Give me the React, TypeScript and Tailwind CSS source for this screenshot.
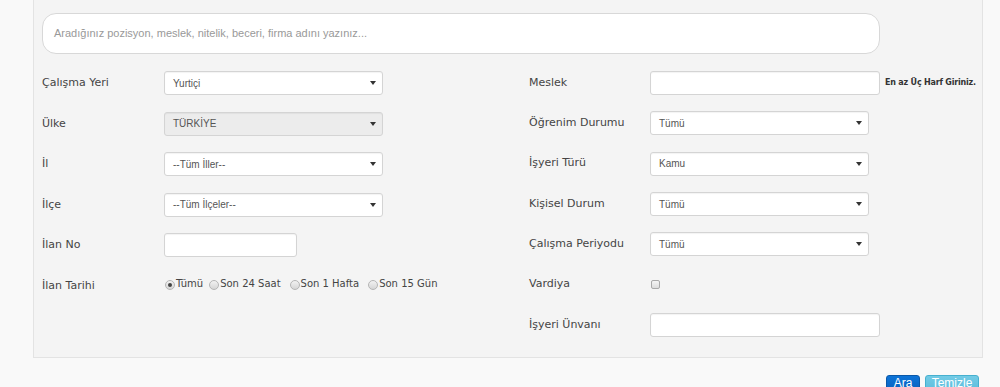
import React from 'react'

const leftRows = [
  { label: 'Çalışma Yeri', type: 'select', value: 'Yurtiçi' },
  { label: 'Ülke', type: 'disabled', value: 'TÜRKİYE' },
  { label: 'İl', type: 'select', value: '--Tüm İller--' },
  { label: 'İlçe', type: 'select', value: '--Tüm İlçeler--' },
  { label: 'İlan No', type: 'short' },
  { label: 'İlan Tarihi', type: 'radio' },
]

const rightRows = [
  { label: 'Meslek', type: 'meslek' },
  { label: 'Öğrenim Durumu', type: 'select', value: 'Tümü' },
  { label: 'İşyeri Türü', type: 'select', value: 'Kamu' },
  { label: 'Kişisel Durum', type: 'select', value: 'Tümü' },
  { label: 'Çalışma Periyodu', type: 'select', value: 'Tümü' },
  { label: 'Vardiya', type: 'check' },
  { label: 'İşyeri Ünvanı', type: 'text' },
]

const radios = [
  { text: 'Tümü', gap: 'ml-[1px]' },
  { text: 'Son 24 Saat', gap: 'ml-[6px]' },
  { text: 'Son 1 Hafta', gap: 'ml-[9px]' },
  { text: 'Son 15 Gün', gap: 'ml-[9px]' },
]

const Select = ({ value, disabled, w }: { value: string; disabled?: boolean; w: string }) => (
  <div
    className={`${w} flex h-[24px] items-center justify-between rounded-[3px] border border-[#d4d4d4] pr-[6px] pl-[8px] text-[10px] text-[#555] shadow-[inset_0_1px_1px_rgba(0,0,0,0.05)] ${
      disabled ? 'bg-[#ececec]' : 'bg-white'
    }`}
    style={{ fontFamily: '"Liberation Sans", Arial, sans-serif' }}
  >
    <span>{value}</span>
    <svg width="6" height="4" viewBox="0 0 6 4">
      <path d="M0 0h6L3 4z" fill="#333" />
    </svg>
  </div>
)

const TextBox = ({ w }: { w: string }) => (
  <div className={`${w} h-[24px] shrink-0 rounded-[3px] border border-[#d4d4d4] bg-white shadow-[inset_0_1px_1px_rgba(0,0,0,0.05)]`} />
)

const Radio = ({ checked }: { checked?: boolean }) => (
  <span className="mt-[4px] flex h-[10px] w-[10px] items-center justify-center rounded-full border border-[#b5b5b5] bg-gradient-to-b from-[#f2f2f2] to-[#d6d6d6]">
    {checked && <span className="h-[4px] w-[4px] rounded-full bg-[#444]" />}
  </span>
)

function renderField(row: any) {
  switch (row.type) {
    case 'select':
      return <Select value={row.value} w="w-[219px]" />
    case 'disabled':
      return <Select value={row.value} disabled w="w-[219px]" />
    case 'short':
      return <TextBox w="w-[133px]" />
    case 'text':
      return <TextBox w="w-[230px]" />
    case 'meslek':
      return (
        <div className="flex items-center">
          <TextBox w="w-[230px]" />
          <span
            className="ml-[5px] text-[8px] font-bold tracking-[-0.2px] whitespace-nowrap text-[#333]"
            style={{ fontFamily: '"DejaVu Sans", Verdana, sans-serif' }}
          >
            En az Üç Harf Giriniz.
          </span>
        </div>
      )
    case 'check':
      return (
        <span className="ml-[1px] block h-[9px] w-[9px] rounded-[2px] border border-[#a9a9a9] bg-gradient-to-b from-[#f5f5f5] to-[#dcdcdc]" />
      )
    case 'radio':
      return (
        <div className="-mt-[5px] flex items-start text-[10px] text-[#444]">
          {radios.map((r, i) => (
            <label key={r.text} className={`flex items-start whitespace-nowrap ${r.gap}`}>
              <Radio checked={i === 0} />
              <span className="ml-[1px]">{r.text}</span>
            </label>
          ))}
        </div>
      )
  }
  return null
}

const App: React.FC = () => {
  return (
    <div
      className="h-[387px] w-[1000px] overflow-hidden bg-[#f9f9f9] text-[#444]"
      style={{ fontFamily: '"DejaVu Sans", Verdana, sans-serif' }}
    >
      {/* Arama paneli */}
      <div className="ml-[33px] h-[358px] w-[950px] border-r border-b border-l border-[#e3e3e3] bg-[#f4f4f4] pt-[13px] pl-[8px]">
        <div
          className="flex h-[41px] w-[838px] items-center rounded-[14px] border border-[#d8d8d8] bg-white pl-[11px] text-[11px] text-[#999]"
          style={{ fontFamily: '"Liberation Sans", Arial, sans-serif' }}
        >
          Aradığınız pozisyon, meslek, nitelik, beceri, firma adını yazınız...
        </div>

        <div className="mt-[9px] flex">
          {/* Sol sütun */}
          <div className="w-[487px] shrink-0">
            {leftRows.map((row) => (
              <div key={row.label} className="flex h-[40.5px] items-center text-[11px]">
                <div className="w-[122px] shrink-0">{row.label}</div>
                {renderField(row)}
              </div>
            ))}
          </div>

          {/* Sağ sütun */}
          <div className="shrink-0">
            {rightRows.map((row) => (
              <div key={row.label} className="flex h-[40.3px] items-center text-[11px]">
                <div className="w-[121px] shrink-0">{row.label}</div>
                {renderField(row)}
              </div>
            ))}
          </div>
        </div>
      </div>

      {/* Butonlar */}
      <div
        className="mt-[17px] flex justify-end gap-[5px] pr-[21px] text-[12px] text-white"
        style={{ fontFamily: '"Liberation Sans", Arial, sans-serif' }}
      >
        <button className="h-[22px] w-[34px] rounded-[3px] border border-[#0a58a8] bg-gradient-to-b from-[#0d74d8] to-[#0a5bb5] pb-[6px] leading-[14px]">
          Ara
        </button>
        <button className="h-[22px] w-[54px] rounded-[3px] border border-[#46b0cf] bg-gradient-to-b from-[#72cbe6] to-[#55b8d8] pb-[6px] leading-[14px]">
          Temizle
        </button>
      </div>
    </div>
  )
}

export default App
